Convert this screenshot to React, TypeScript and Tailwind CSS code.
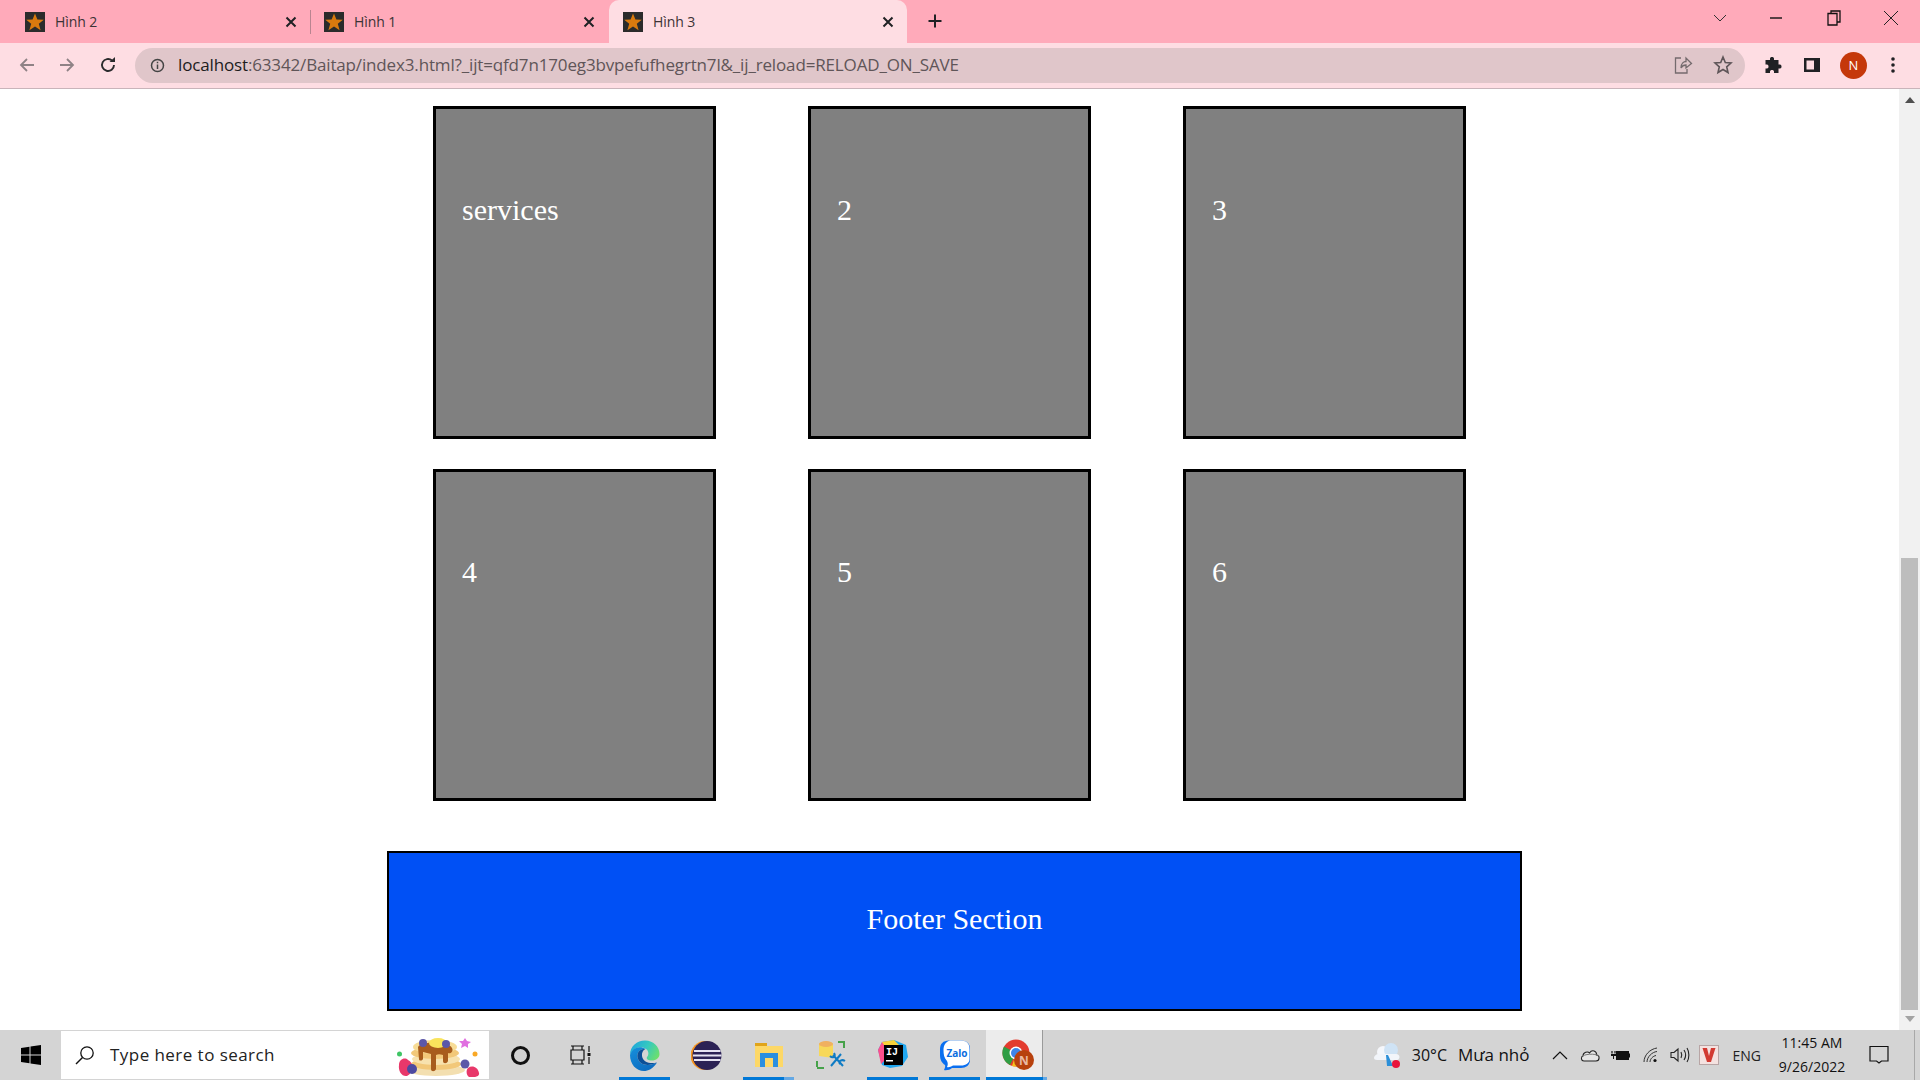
import React from "react";

const Fav = () => (
  <svg width="20" height="20" viewBox="0 0 20 20" className="shrink-0">
    <rect width="20" height="20" fill="#2b2b2b" />
    <path d="M10 1.500 12.400 7.600 18.800 7.800 13.800 11.800 15.600 18.200 10 14.600 4.400 18.200 6.200 11.800 1.200 7.800 7.600 7.600Z" fill="#d97a0e" />
  </svg>
);

const X = () => (
  <svg width="12" height="12" viewBox="0 0 12 12" className="shrink-0">
    <path d="M1.500 1.500 10.500 10.500M10.500 1.500 1.500 10.500" stroke="#202124" strokeWidth="2" />
  </svg>
);

function Tab({ title, active, w, cls }: { title: string; active?: boolean; w: string; cls: string }) {
  return (
    <div className={`flex items-center h-[43px] shrink-0 ${w} ${cls} ${active ? "bg-[#fedde3] rounded-t-[10px]" : ""}`}>
      <Fav />
      <span className="ml-[10px] flex-1 text-[14px] tracking-[-0.1px] text-[#3b3335] font-['Open_Sans',sans-serif]">{title}</span>
      <X />
    </div>
  );
}

const Cell = ({ children, low }: { children: React.ReactNode; low?: boolean }) => (
  <div className={`h-full border-[3px] border-black bg-[#808080] pl-[26px] text-[30px] leading-[34px] text-white font-['Liberation_Serif',serif] ${low ? "pt-[83px]" : "pt-[84px]"}`}>
    {children}
  </div>
);

function Slot({ w, children, bar, active }: { w: string; children: React.ReactNode; bar?: React.ReactNode; active?: boolean }) {
  return (
    <div className={`relative flex h-[50px] shrink-0 items-center justify-center ${w} ${active ? "bg-[#ececec]" : ""}`}>
      {children}
      {bar}
    </div>
  );
}

const Bar = () => <div className="absolute bottom-0 left-0 right-0 h-[3px] bg-[#0078d7]" />;

const Pancake = () => (
  <svg width="84" height="44" viewBox="0 0 84 44">
    <circle cx="3.500" cy="21" r="2.500" fill="#3fc565" />
    <circle cx="79" cy="21" r="2.500" fill="#f9a825" />
    <path d="M69 5 71 8 75 9 72 11 72 15 69 13 65 15 66 11 63 8 67 8Z" fill="#e070e0" />
    <ellipse cx="40" cy="37" rx="29" ry="6" fill="#f3dfb0" />
    <ellipse cx="40" cy="31" rx="25" ry="6" fill="#f2c879" />
    <ellipse cx="40" cy="26" rx="24" ry="6" fill="#f7e2ae" />
    <ellipse cx="39" cy="20" rx="24" ry="6" fill="#f2c879" />
    <ellipse cx="39" cy="14" rx="22" ry="7" fill="#f7dc97" />
    <path d="M22 14C26 8 52 8 56 15 58 19 54 21 52 20L52 28C51 31 47 31 47 28L47 22C44 21 42 21 40 22L40 36C39 39 35 39 35 36L35 21 27 19 27 26C26 28 23 28 23 26Z" fill="#a85c1c" />
    <ellipse cx="42" cy="10" rx="9" ry="5" fill="#f9e45c" />
    <circle cx="27" cy="10" r="4" fill="#5b57a8" />
    <circle cx="50" cy="11" r="4" fill="#5b57a8" />
    <circle cx="69" cy="31" r="4.500" fill="#5b57a8" />
    <path d="M3 32C3 26 9 24 12 27 18 29 18 40 11 43 6 44 2 38 3 32Z" fill="#e8386a" />
    <path d="M72 35C76 32 82 34 83 40 84 44 76 45 73 44 70 42 70 37 72 35Z" fill="#e8386a" />
    <circle cx="16" cy="36" r="5" fill="#4d4aa0" />
  </svg>
);

export default function App() {
  return (
    <div className="flex h-screen w-screen flex-col overflow-hidden bg-white font-['Open_Sans',sans-serif]">
      {/* Tab strip */}
      <div className="flex h-[43px] shrink-0 items-center bg-[#ffaaba]">
        <Tab title="Hình 2" w="w-[300px]" cls="ml-[10px] pl-[15px] pr-[13px]" />
        <div className="h-[24px] w-px bg-[#b98490]" />
        <Tab title="Hình 1" w="w-[297px]" cls="pl-[13px] pr-[13px]" />
        <Tab title="Hình 3" active w="w-[298px]" cls="ml-px pl-[14px] pr-[13px]" />
        <svg width="16" height="16" viewBox="0 0 16 16" className="ml-[20px] mb-[1px]">
          <path d="M8 1.500V14.500M1.500 8H14.500" stroke="#202124" strokeWidth="2" />
        </svg>
        <div className="ml-auto flex items-center pb-[7px]">
          <svg width="14" height="10" viewBox="0 0 14 10"><path d="M1 2 7 8 13 2" fill="none" stroke="#333" strokeWidth="1" /></svg>
          <svg width="14" height="10" viewBox="0 0 14 10" className="ml-[42px]"><path d="M1 5H13" stroke="#111" strokeWidth="1.400" /></svg>
          <svg width="14" height="16" viewBox="0 0 14 16" className="ml-[44px]"><path d="M1 3.500H10V15H1ZM4 3.500V1H13V12H10" fill="none" stroke="#111" strokeWidth="1.300" /></svg>
          <svg width="16" height="16" viewBox="0 0 16 16" className="ml-[42px] mr-[21px]"><path d="M1 1 15 15M15 1 1 15" stroke="#222" strokeWidth="1" /></svg>
        </div>
      </div>

      {/* Toolbar */}
      <div className="flex h-[46px] shrink-0 items-center border-b border-[#c9b4ba] bg-[#fedde3] pb-[1px]">
        <svg width="18" height="18" viewBox="0 0 18 18" className="ml-[18px]"><path d="M16 9H3M9 3 3 9 9 15" fill="none" stroke="#8f8286" strokeWidth="1.800" /></svg>
        <svg width="18" height="18" viewBox="0 0 18 18" className="ml-[22px]"><path d="M2 9H15M9 3 15 9 9 15" fill="none" stroke="#8f8286" strokeWidth="1.800" /></svg>
        <svg width="18" height="18" viewBox="0 0 18 18" className="ml-[23px]"><path d="M15 9A6 6 0 1 1 13 4.500" fill="none" stroke="#2a2a2c" strokeWidth="1.900" /><path d="M10.500 6H16V1Z" fill="#2a2a2c" /></svg>
        <div className="ml-[18px] flex h-[35px] w-[1610px] shrink-0 items-center rounded-full bg-[#e0c6ca] pl-[15px] pr-[12px]">
          <svg width="15" height="15" viewBox="0 0 15 15"><circle cx="7.500" cy="7.500" r="6" fill="none" stroke="#444" strokeWidth="1.500" /><path d="M7.500 6.500V11M7.500 3.800V5.300" stroke="#444" strokeWidth="1.500" /></svg>
          <span className="ml-[13px] whitespace-nowrap text-[17px] tracking-[-0.15px] text-[#5f5558]">
            <span className="text-[#201c1d]">localhost</span>:63342/Baitap/index3.html?_ijt=qfd7n170eg3bvpefufhegrtn7l&amp;_ij_reload=RELOAD_ON_SAVE
          </span>
          <div className="ml-auto flex items-center">
            <svg width="20" height="20" viewBox="0 0 20 20"><path d="M8 3H2.500V18H14V14M8 13C8 8 11 6.500 13 6.500V3L18.500 8.500 13 13V10C11 10 9 11 8 13Z" fill="none" stroke="#746a6d" strokeWidth="1.300" /></svg>
            <svg width="20" height="20" viewBox="0 0 20 20" className="ml-[20px]"><path d="M10 2 12.300 7.500 18 8 13.700 11.800 15 17.500 10 14.500 5 17.500 6.300 11.800 2 8 7.700 7.500Z" fill="none" stroke="#5e5558" strokeWidth="1.600" /></svg>
          </div>
        </div>
        <svg width="20" height="20" viewBox="0 0 20 20" className="ml-[18px]"><path d="M7 3.500C7 1.500 11 1.500 11 3.500V5H15.500V9.500H17C19 9.500 19 13.500 17 13.500H15.500V18H11V16.500C11 14.500 7 14.500 7 16.500V18H2.500V13.500H4C6 13.500 6 9.500 4 9.500H2.500V5H7Z" fill="#202124" /></svg>
        <svg width="18" height="18" viewBox="0 0 18 18" className="ml-[20px]"><path d="M1 2H17V16H1Z M3.500 4.500V13.500H11V4.500Z" fill="#202124" fillRule="evenodd" /></svg>
        <div className="ml-[19px] flex h-[27px] w-[27px] items-center justify-center rounded-full bg-[#c5380a] text-[13px] leading-none text-white">N</div>
        <svg width="4" height="16" viewBox="0 0 4 16" className="ml-[24px]"><circle cx="2" cy="2" r="1.800" fill="#202124" /><circle cx="2" cy="8" r="1.800" fill="#202124" /><circle cx="2" cy="14" r="1.800" fill="#202124" /></svg>
      </div>

      {/* Page */}
      <div className="flex min-h-0 flex-1">
        <main className="min-w-0 flex-1 pt-[17px]">
          <div className="mx-auto grid w-[1033px] grid-cols-3 grid-rows-[333px_332px] gap-x-[92px] gap-y-[30px]">
            <Cell>services</Cell>
            <Cell>2</Cell>
            <Cell>3</Cell>
            <Cell low>4</Cell>
            <Cell low>5</Cell>
            <Cell low>6</Cell>
          </div>
          <div className="ml-[387px] mt-[50px] h-[160px] w-[1135px] border-2 border-black bg-[#0050f5] pt-[49px] text-center text-[30px] leading-[34px] text-white font-['Liberation_Serif',serif]">
            Footer Section
          </div>
        </main>
        <div className="flex w-[21px] shrink-0 flex-col items-center bg-[#f1f1f1]">
          <svg width="10" height="6" viewBox="0 0 10 6" className="mt-[8px]"><path d="M0 6 5 0 10 6Z" fill="#505050" /></svg>
          <div className="mt-[455px] h-[452px] w-[17px] bg-[#bdbdbd]" />
          <svg width="10" height="6" viewBox="0 0 10 6" className="mt-[6px]"><path d="M0 0 5 6 10 0Z" fill="#a3a3a3" /></svg>
        </div>
      </div>

      {/* Taskbar */}
      <div className="flex h-[50px] shrink-0 items-center bg-[#d4d4d4] text-[#111]">
        <Slot w="w-[61px]">
          <svg width="20" height="20" viewBox="0 0 20 20"><path d="M0 3 8.500 1.700V9.500H0ZM9.500 1.500 20 0V9.500H9.500ZM0 10.500H8.500V18.300L0 17ZM9.500 10.500H20V20L9.500 18.500Z" fill="#000" /></svg>
        </Slot>
        <div className="flex h-[48px] w-[428px] shrink-0 items-center bg-white pl-[14px] pr-[9px]">
          <svg width="20" height="20" viewBox="0 0 20 20"><circle cx="12" cy="8" r="6.200" fill="none" stroke="#111" strokeWidth="1.300" /><path d="M7.500 12.500 1 19" stroke="#111" strokeWidth="1.500" /></svg>
          <span className="ml-[15px] text-[17px] tracking-[0.45px] text-[#222]">Type here to search</span>
          <div className="ml-auto"><Pancake /></div>
        </div>
        <Slot w="w-[62px]">
          <div className="h-[19px] w-[19px] rounded-full border-[3px] border-[#111]" />
        </Slot>
        <Slot w="w-[60px]">
          <svg width="22" height="20" viewBox="0 0 22 20"><path d="M1 1H14M1 19H14M3 1V5M12 1V5M3 15V19M12 15V19M1 5H14V15H1ZM19 1V7M19 12V19" fill="none" stroke="#111" strokeWidth="1.200" /><rect x="17.500" y="8" width="3" height="3" fill="#111" /></svg>
        </Slot>
        <div className="w-[8px]" />
        <Slot w="w-[51px]" bar={<Bar />}>
          <svg width="31" height="31" viewBox="0 0 31 31">
            <defs>
              <linearGradient id="e1" x1="0" y1="0.300" x2="1" y2="0.700"><stop offset="0" stopColor="#1fa6dc" /><stop offset="0.500" stopColor="#35c9c0" /><stop offset="1" stopColor="#6fe06a" /></linearGradient>
              <linearGradient id="e2" x1="0" y1="0" x2="0.600" y2="1"><stop offset="0" stopColor="#1690dc" /><stop offset="1" stopColor="#0d6cc0" /></linearGradient>
            </defs>
            <path d="M1 15C1 6 8 .5 16 .5 25 .5 30.500 7 30.500 14 30.500 18 27 20.500 23 20.500 19 20.500 17 19 18 17 20 15 20 11 17 9 12 5 4 8 1 15Z" fill="url(#e1)" />
            <path d="M1 15C3 8 11 5 16.500 9 10 8 7 14 9 19 11 25 19 27 28 22.500 24 29 19 31 15 31 7 31 1 24 1 15Z" fill="url(#e2)" />
            <path d="M16.500 9C10 8 7 14 9 19 11 25 19 27 28 22.500 22 24 14 23 13 16 12.500 13 14 10 16.500 9Z" fill="#0b4f98" />
          </svg>
        </Slot>
        <div className="w-[11px]" />
        <Slot w="w-[51px]">
          <svg width="31" height="31" viewBox="0 0 31 31">
            <circle cx="14" cy="15.500" r="14.500" fill="#f7941e" />
            <circle cx="16" cy="15.500" r="14.500" fill="#2c2255" />
            <path d="M3 11H29.500M2 15.500H30.500M3 20H29.500" stroke="#e6e3f2" strokeWidth="2" />
          </svg>
        </Slot>
        <div className="w-[11px]" />
        <Slot
          w="w-[51px]"
          bar={
            <div className="absolute bottom-0 left-0 right-0 flex h-[3px]">
              <div className="w-[41px] bg-[#0078d7]" />
              <div className="flex-1 bg-[#64a8e4]" />
            </div>
          }
        >
          <svg width="28" height="24" viewBox="0 0 28 24">
            <path d="M0 0H12V4H0Z" fill="#e0a41a" />
            <path d="M0 3H28V24H0Z" fill="#fdd867" />
            <path d="M5 10H23V24H18V15H10V24H5Z" fill="#2a8fe0" />
          </svg>
        </Slot>
        <div className="w-[11px]" />
        <Slot w="w-[51px]">
          <svg width="30" height="30" viewBox="0 0 30 30">
            <path d="M1 27V21M1 28H8M22 2H28V8" fill="none" stroke="#46a24a" strokeWidth="2" />
            <path d="M3 4C3 1 17 1 17 4V18L3 16Z" fill="#f7d859" />
            <ellipse cx="10" cy="4" rx="7" ry="3" fill="#f0b060" />
            <path d="M15 26 25 14M27 26 17 15M14 16C17 19 20 16 18 13M24 24C22 21 26 19 29 21" fill="none" stroke="#0e7bc4" strokeWidth="2" />
          </svg>
        </Slot>
        <div className="w-[11px]" />
        <Slot w="w-[51px]" bar={<Bar />}>
          <svg width="30" height="30" viewBox="0 0 30 30">
            <path d="M4 2 16 0 28 5 30 17 24 26 12 28 4 25 0 10Z" fill="#21a7f0" />
            <path d="M3 24 0 10 4 2 14 1 12 15Z" fill="#fe4f8c" />
            <path d="M4 2 16 0 22 6 8 8Z" fill="#f8d23a" />
            <rect x="6" y="5" width="19" height="20" fill="#000" />
            <text x="8" y="15" fontFamily="'Liberation Mono',monospace" fontWeight="bold" fontSize="10" fill="#fff">IJ</text>
            <rect x="8" y="20" width="7" height="1.500" fill="#fff" />
          </svg>
        </Slot>
        <div className="w-[11px]" />
        <Slot w="w-[51px]" bar={<Bar />}>
          <svg width="30" height="31" viewBox="0 0 30 31">
            <path d="M9 .5H21C27 .5 30 4 30 9V20C30 25 26 28 21 28H12C10 30 6 30.500 4 30 5 28 5.500 26 5 25 2 23 0 20 0 15V9C0 4 3 .5 9 .5Z" fill="#0a6ff0" />
            <path d="M10 .5H21C27 .5 29.500 4 29.500 9V19C29.500 23 26 25.500 21 25.500H13C10.500 27 8.500 27.500 7 27 8 25 8 23 7 21 4 18 3.500 14 3.500 10 3.500 5 6 1.500 10 .5Z" fill="#fff" />
            <text x="17" y="17" textAnchor="middle" fontFamily="'Open Sans',sans-serif" fontWeight="bold" fontSize="10" fill="#0a6de0">Zalo</text>
          </svg>
        </Slot>
        <div className="w-[6px]" />
        <Slot
          w="w-[61px]"
          bar={
            <>
              <div className="absolute bottom-0 left-0 right-[4px] h-[3px] bg-[#0078d7]" />
              <div className="absolute bottom-0 right-0 top-0 w-[4px] bg-[#d4d4d4]" />
              <div className="absolute bottom-0 right-0 h-[3px] w-[4px] bg-[#64a8e4]" />
              <div className="absolute bottom-[3px] right-[4px] top-0 w-px bg-[#9a9a9a]" />
            </>
          }
          active
        >
          <svg width="32" height="32" viewBox="0 0 32 32" className="ml-[2px]">
            <circle cx="14" cy="14" r="13.500" fill="#e33b2e" />
            <path d="M14 14 2 7.500A13.500 13.500 0 0 0 8 26Z" fill="#2f9e44" />
            <path d="M14 14H27.500A13.500 13.500 0 0 1 10 27Z" fill="#f8c21a" />
            <circle cx="14" cy="14" r="6.500" fill="#fff" />
            <circle cx="14" cy="14" r="5" fill="#3d85e8" />
            <circle cx="22" cy="21" r="10" fill="#b7410e" />
            <text x="22" y="25.500" textAnchor="middle" fontFamily="'Open Sans',sans-serif" fontWeight="bold" fontSize="12" fill="#e9b9a5">N</text>
          </svg>
        </Slot>

        {/* Tray */}
        <div className="ml-auto flex h-[50px] items-center">
          <svg width="30" height="28" viewBox="0 0 30 28" className="shrink-0">
            <circle cx="11" cy="11" r="6" fill="#f5f7fb" />
            <circle cx="19" cy="9" r="7" fill="#cfe3f5" />
            <path d="M2 17C2 13 8 12 10 13H24C29 13 28 19 25 19H5C3 19 2 18 2 17Z" fill="#f2f5fa" />
            <path d="M14 14 16 14 21 25 15 25Z" fill="#2c8fd8" />
            <circle cx="24" cy="23" r="4" fill="#e8143c" />
          </svg>
          <span className="ml-[10px] text-[16px] text-[#111]">30°C</span>
          <span className="ml-[11px] text-[17px] text-[#111]">Mưa nhỏ</span>
          <svg width="16" height="9" viewBox="0 0 16 9" className="ml-[22px]"><path d="M1 8 8 1 15 8" fill="none" stroke="#111" strokeWidth="1.200" /></svg>
          <svg width="20" height="14" viewBox="0 0 20 14" className="ml-[12px]"><path d="M4 13C1 13 .5 9 3 8 3 4 8 3 9.500 5 12 1 17 3 16.500 7 20 7 20 13 16 13Z" fill="#e5e5e5" stroke="#222" strokeWidth="1.100" /><path d="M1 9C4 6 15 5 19 8" fill="none" stroke="#777" strokeWidth="1" /></svg>
          <svg width="20" height="14" viewBox="0 0 20 14" className="ml-[10px]"><path d="M2 3V5.500M5 3V5.500" stroke="#111" strokeWidth="1.200" /><path d="M1 6H6V8H4V11H3V8H1Z" fill="#111" /><rect x="6" y="3" width="13" height="9" fill="#111" /><rect x="19" y="5.500" width="1" height="4" fill="#111" /></svg>
          <svg width="16" height="16" viewBox="0 0 16 16" className="ml-[13px]"><path d="M1 15C1 8 7 2 14 1M4 15C4 10 9 5 14 4.500M7 15C7 12 10 9 13 8.500" fill="none" stroke="#333" strokeWidth="1" /><circle cx="12" cy="13.500" r="1.600" fill="#111" /></svg>
          <svg width="20" height="16" viewBox="0 0 20 16" className="ml-[11px]"><path d="M1 5.500H4L8 2V14L4 10.500H1Z" fill="none" stroke="#222" strokeWidth="1.100" /><path d="M11 5C12 7 12 9 11 11M14 3C16 6 16 10 14 13M17 1C19.500 5 19.500 11 17 15" fill="none" stroke="#222" strokeWidth="1.100" /></svg>
          <svg width="20" height="20" viewBox="0 0 20 20" className="ml-[9px]"><rect x=".5" y=".5" width="19" height="19" fill="#f4e2e0" stroke="#b8a5a5" /><path d="M3.500 3H8L10 11 12 3H16.500L12 17H8Z" fill="#d23a32" /></svg>
          <span className="ml-[14px] text-[14px] text-[#222]">ENG</span>
          <div className="ml-[16px] flex w-[70px] flex-col items-center text-[14px] leading-[24px] text-[#111]">
            <span className="whitespace-nowrap">11:45 AM</span>
            <span className="whitespace-nowrap">9/26/2022</span>
          </div>
          <svg width="20" height="20" viewBox="0 0 20 20" className="ml-[22px]"><path d="M1 1.500H19V16H12.500L10 18 7.500 16H1Z" fill="none" stroke="#111" strokeWidth="1.200" /></svg>
          <div className="ml-[25px] mr-[5px] h-[50px] w-px bg-[#a8a8a8]" />
        </div>
      </div>
    </div>
  );
}
